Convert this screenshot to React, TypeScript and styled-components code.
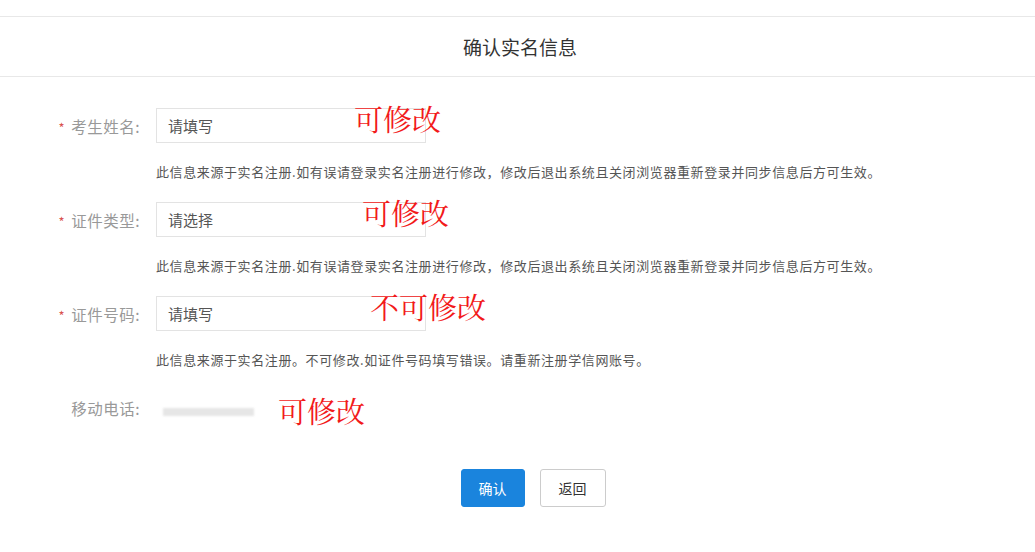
import styled, { createGlobalStyle } from 'styled-components';

const Global = createGlobalStyle`
  body {
    margin: 0;
    background: #fff;
    font-family: "Microsoft YaHei", "Noto Sans CJK SC", sans-serif;
  }
`;

const Page = styled.div`
  padding-top: 16px;
`;

const Header = styled.div`
  height: 59px;
  border-top: 1px solid #e8e8e8;
  border-bottom: 1px solid #e8e8e8;
  display: flex;
  align-items: center;
  justify-content: center;
  font-size: 19px;
  color: #333;
  padding-left: 5px;
`;

const Form = styled.div`
  padding-top: 31px;
  position: relative;
`;

const Row = styled.div`
  display: grid;
  grid-template-columns: 140px 270px;
  column-gap: 16px;
  align-items: center;
  height: 35px;
  position: relative;
`;

const Label = styled.label`
  text-align: right;
  font-size: 15.5px;
  letter-spacing: 0.5px;
  color: #999;
`;

const Star = styled.span`
  color: #d9534f;
  margin-right: 6px;
  font-size: 13px;
`;

const Input = styled.div`
  box-sizing: border-box;
  height: 35px;
  border: 1px solid #e3e3e3;
  padding: 0 11px;
  display: flex;
  align-items: center;
  font-size: 15px;
  color: #555;
`;

const Hint = styled.div`
  margin: 19px 0 20px 156px;
  font-size: 13px;
  letter-spacing: 0.6px;
  line-height: 20px;
  color: #555;
`;

const Blur = styled.div`
  width: 91px;
  height: 8px;
  margin: 8px 0 0 7px;
  background: #e6e6e6;
  filter: blur(1px);
`;

const Note = styled.span<{ $x: number; $top?: number }>`
  position: absolute;
  left: ${p => p.$x}px;
  top: ${p => p.$top ?? -10}px;
  font-family: "Noto Serif CJK SC", "Liberation Serif", serif;
  font-size: 29px;
  color: #f21a1a;
  white-space: nowrap;
`;

const Buttons = styled.div`
  display: flex;
  justify-content: center;
  gap: 15px;
  margin-top: 44px;
  padding-left: 31px;
`;

const Button = styled.button<{ $primary?: boolean }>`
  width: ${p => (p.$primary ? 64 : 66)}px;
  height: 38px;
  border-radius: 3px;
  font-size: 14px;
  font-family: inherit;
  border: 1px solid ${p => (p.$primary ? '#1a84dd' : '#ccc')};
  background: ${p => (p.$primary ? '#1a84dd' : '#fff')};
  color: ${p => (p.$primary ? '#fff' : '#333')};
`;

const hint1 = '此信息来源于实名注册.如有误请登录实名注册进行修改，修改后退出系统且关闭浏览器重新登录并同步信息后方可生效。';

export default function App() {
  return (
    <Page>
      <Global />
      <Header>确认实名信息</Header>
      <Form>
        <Row>
          <Label><Star>*</Star>考生姓名:</Label>
          <Input>请填写</Input>
          <Note $x={354}>可修改</Note>
        </Row>
        <Hint>{hint1}</Hint>
        <Row>
          <Label><Star>*</Star>证件类型:</Label>
          <Input>请选择</Input>
          <Note $x={362}>可修改</Note>
        </Row>
        <Hint>{hint1}</Hint>
        <Row>
          <Label><Star>*</Star>证件号码:</Label>
          <Input>请填写</Input>
          <Note $x={370}>不可修改</Note>
        </Row>
        <Hint>此信息来源于实名注册。不可修改.如证件号码填写错误。请重新注册学信网账号。</Hint>
        <Row>
          <Label>移动电话:</Label>
          <Blur />
          <Note $x={278} $top={0}>可修改</Note>
        </Row>
        <Buttons>
          <Button $primary>确认</Button>
          <Button>返回</Button>
        </Buttons>
      </Form>
    </Page>
  );
}
